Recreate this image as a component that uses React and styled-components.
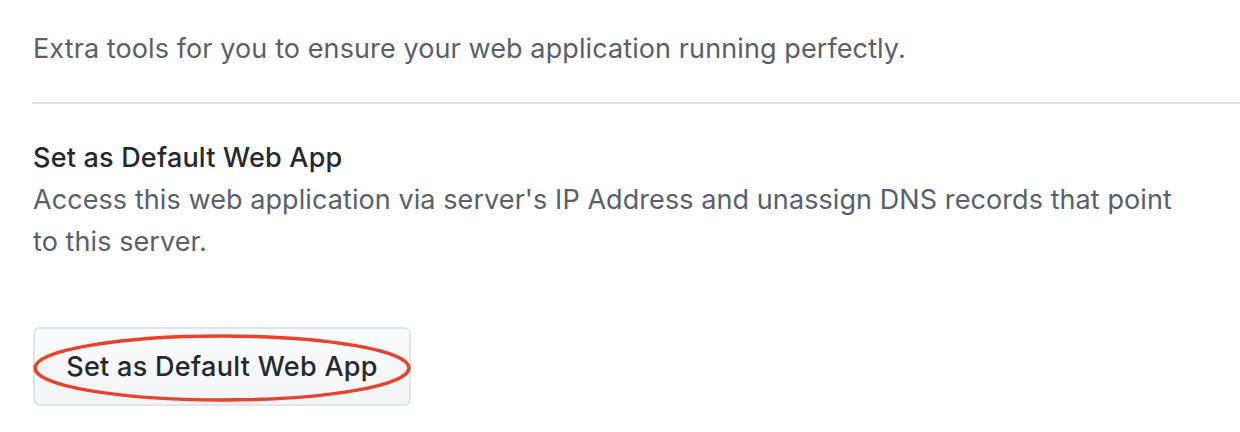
import styled, { createGlobalStyle } from "styled-components";

const GlobalStyle = createGlobalStyle`
    body {
        margin: 0;
        background: #ffffff;
        font-family: Inter, "Noto Sans", "Liberation Sans", sans-serif;
        -webkit-font-smoothing: antialiased;
    }
`;

const App = () => {
    return (
        <Page>
            <GlobalStyle />

            <Intro>Extra tools for you to ensure your web application running perfectly.</Intro>

            <Divider />

            <Section>
                <Title>Set as Default Web App</Title>
                <Description>
                    Access this web application via server's IP Address and unassign DNS records that point to this server.
                </Description>

                <ButtonWrap>
                    <Button type="button">Set as Default Web App</Button>
                    <Highlight viewBox="0 0 378 68" preserveAspectRatio="none" aria-hidden="true">
                        <ellipse cx="189" cy="34" rx="187" ry="32" fill="none" stroke="#e8412c" strokeWidth="3.5" />
                    </Highlight>
                </ButtonWrap>
            </Section>
        </Page>
    )
}

export default App;

const Page = styled.div`
    padding: 28px 0 0 33px;
    width: 1207px;
`

const Intro = styled.p`
    margin: 0;
    font-size: 27px;
    line-height: 42px;
    letter-spacing: 0.1px;
    color: #586069;
`

const Divider = styled.hr`
    margin: 32px 0 0 -1px;
    border: 0;
    height: 2px;
    background: #e1e4e8;
`

const Section = styled.div`
    padding-top: 33px;
`

const Title = styled.h3`
    margin: 0;
    font-size: 27px;
    font-weight: 500;
    line-height: 42px;
    letter-spacing: 0.2px;
    color: #24292e;
`

const Description = styled.p`
    margin: 0;
    max-width: 1170px;
    font-size: 27px;
    line-height: 42px;
    letter-spacing: 0.08px;
    color: #586069;
`

const ButtonWrap = styled.div`
    position: relative;
    display: inline-block;
    margin-top: 64px;
`

const Button = styled.button`
    display: block;
    width: 378px;
    height: 79px;
    padding: 0;
    border: 2px solid #e1e4e8;
    border-radius: 7px;
    background: linear-gradient(180deg, #fafbfc 0%, #f3f4f6 100%);
    font-family: inherit;
    font-size: 27px;
    font-weight: 500;
    letter-spacing: 0.3px;
    color: #24292e;
    cursor: pointer;
`

const Highlight = styled.svg`
    position: absolute;
    left: 0;
    top: 7px;
    width: 378px;
    height: 68px;
    pointer-events: none;
`
